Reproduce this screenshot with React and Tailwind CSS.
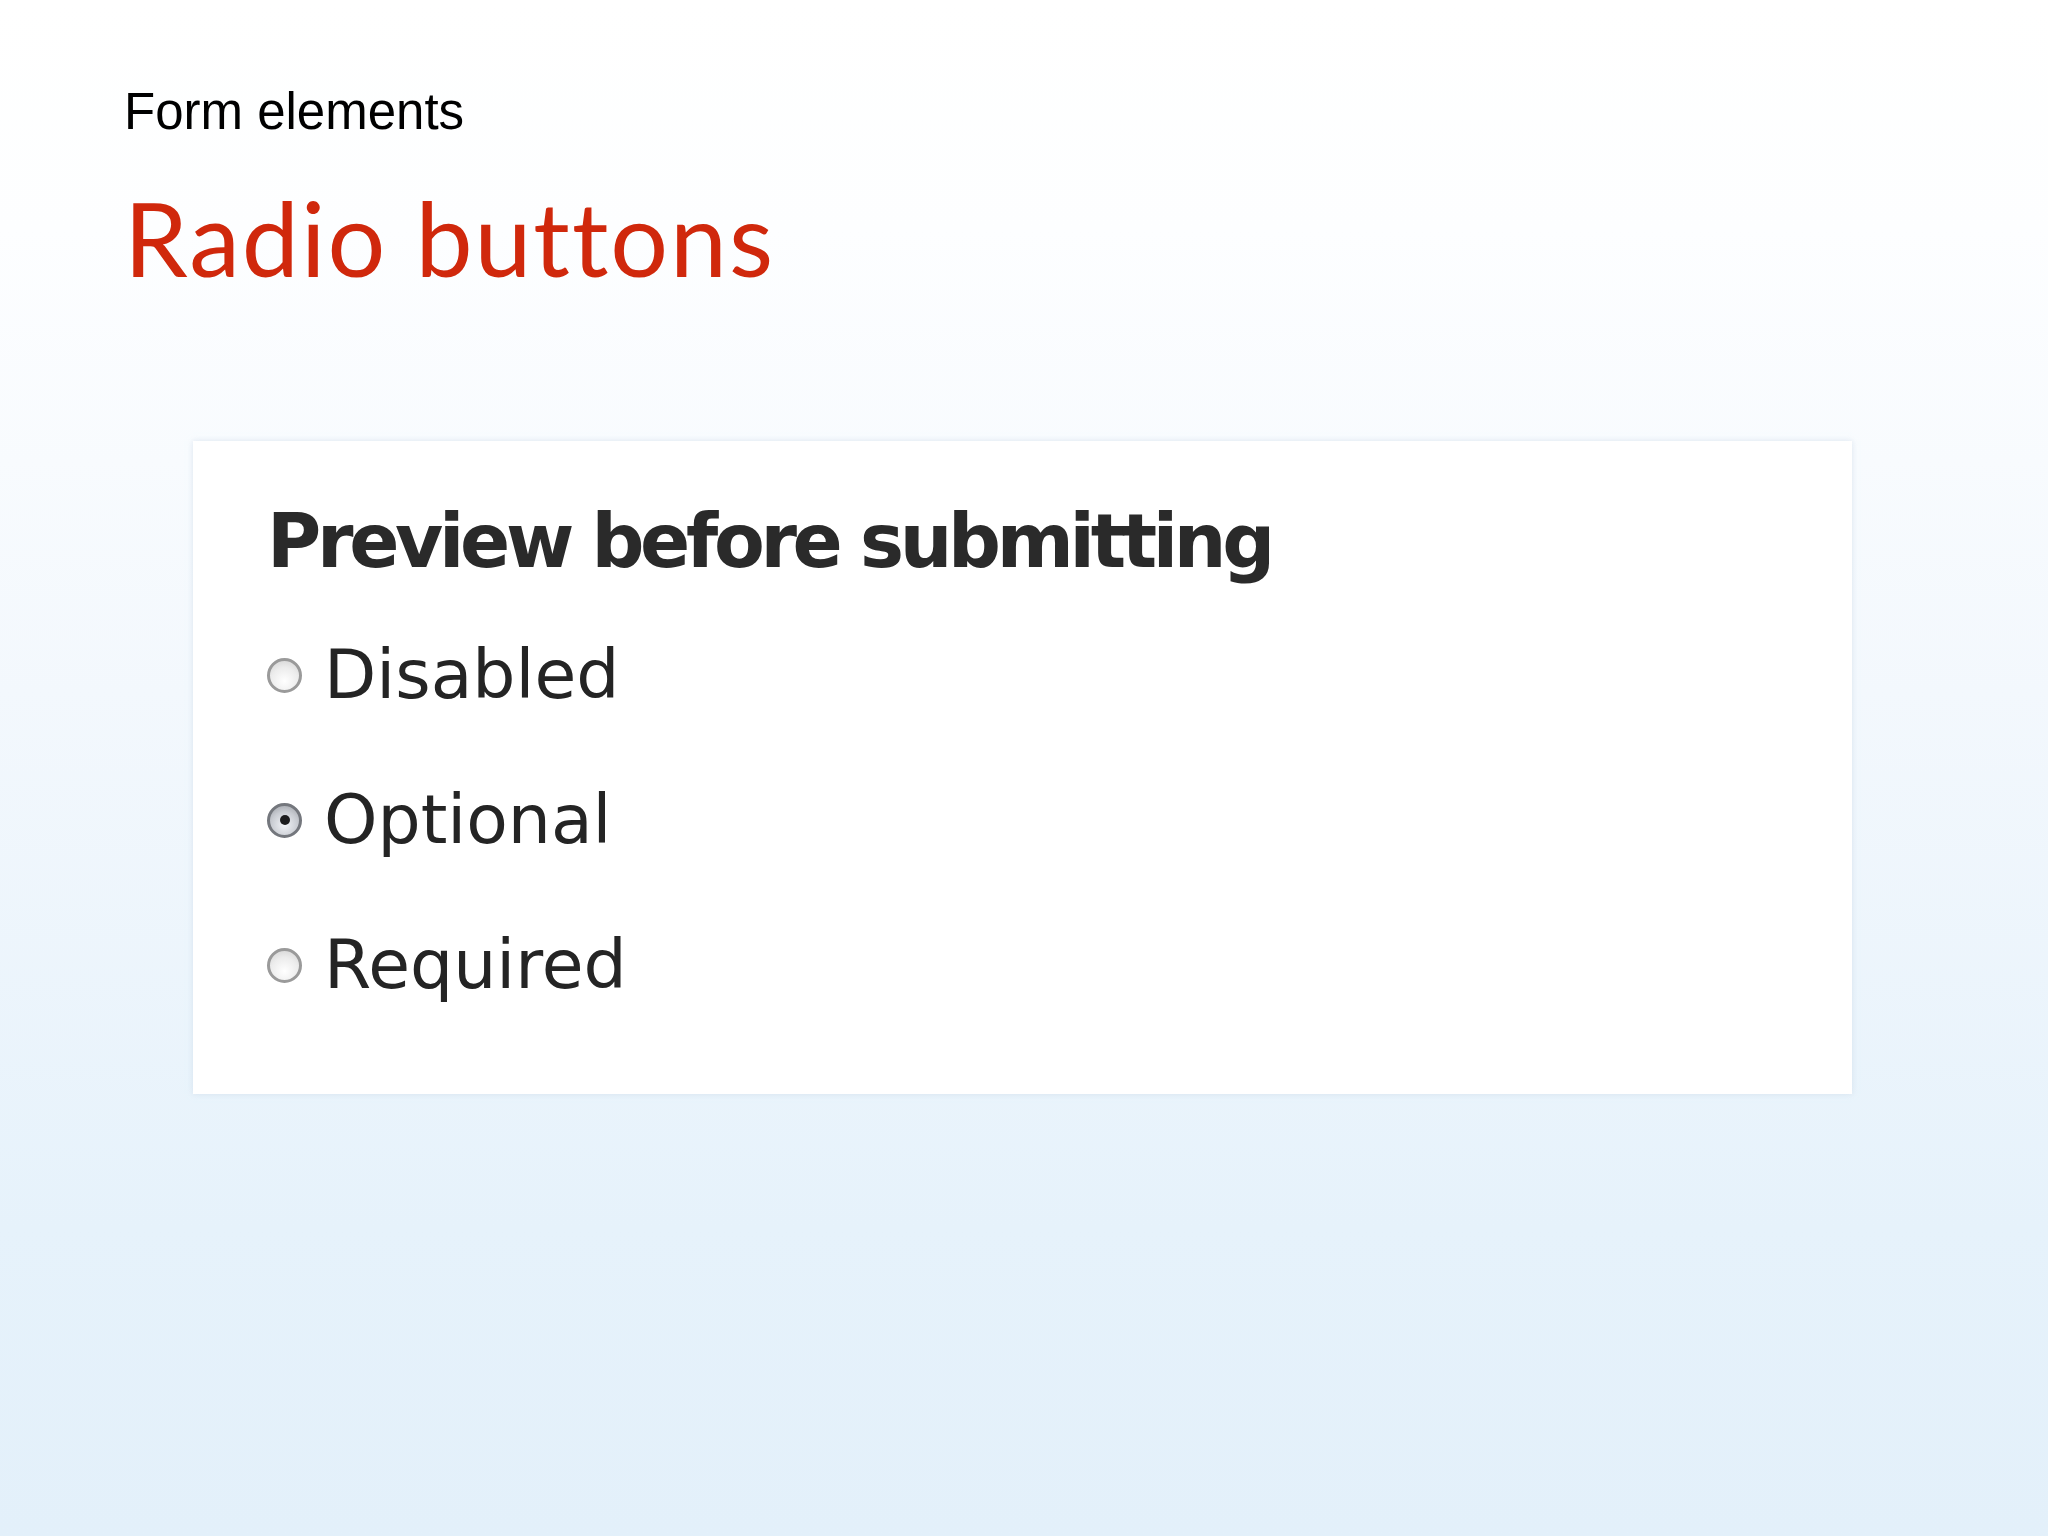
import React from "react";

function Radio({ checked }) {
  return (
    <span
      className={
        "relative flex h-[35px] w-[35px] shrink-0 items-center justify-center rounded-full border-[3px] " +
        (checked
          ? "border-[#74777d] bg-[radial-gradient(circle_at_50%_65%,#f2f4f8_0%,#c9ccd2_55%,#9a9da3_100%)]"
          : "border-[#9a9a9a] bg-[radial-gradient(circle_at_50%_70%,#ffffff_0%,#ececec_55%,#d0d0d0_100%)]")
      }
    >
      {checked && <span className="h-[10px] w-[10px] rounded-full bg-[#1c1c1e]" />}
    </span>
  );
}

function Option({ label, checked }) {
  return (
    <div className="flex items-center gap-[22px]">
      <Radio checked={checked} />
      <span className="font-['DejaVu_Sans',sans-serif] text-[68px] leading-none text-[#242424]">
        {label}
      </span>
    </div>
  );
}

export default function App() {
  return (
    <div className="h-[1536px] w-[2048px] overflow-hidden bg-[linear-gradient(180deg,#ffffff_0%,#fdfeff_15%,#f3f8fd_45%,#e6f2fb_80%,#e3f0fa_100%)]">
      <div className="pl-[124px] pt-[86px]">
        <div className="font-['Liberation_Sans',Arial,sans-serif] text-[51px] leading-none text-black">
          Form elements
        </div>
        <div className="mt-[50px] font-['Lato',sans-serif] text-[102px] leading-none tracking-[2px] text-[#d0280c]">
          Radio buttons
        </div>
      </div>
      <div className="ml-[193px] mt-[152px] h-[653px] w-[1659px] bg-white pl-[74px] pt-[63px] shadow-[0_0_6px_rgba(200,215,230,0.6)]">
        <div className="font-['DejaVu_Sans',sans-serif] text-[74px] font-bold leading-none tracking-[-4.3px] text-[#2a2a2a]">
          Preview before submitting
        </div>
        <div className="mt-[63px] flex flex-col gap-[77px]">
          <Option label="Disabled" />
          <Option label="Optional" checked />
          <Option label="Required" />
        </div>
      </div>
    </div>
  );
}
